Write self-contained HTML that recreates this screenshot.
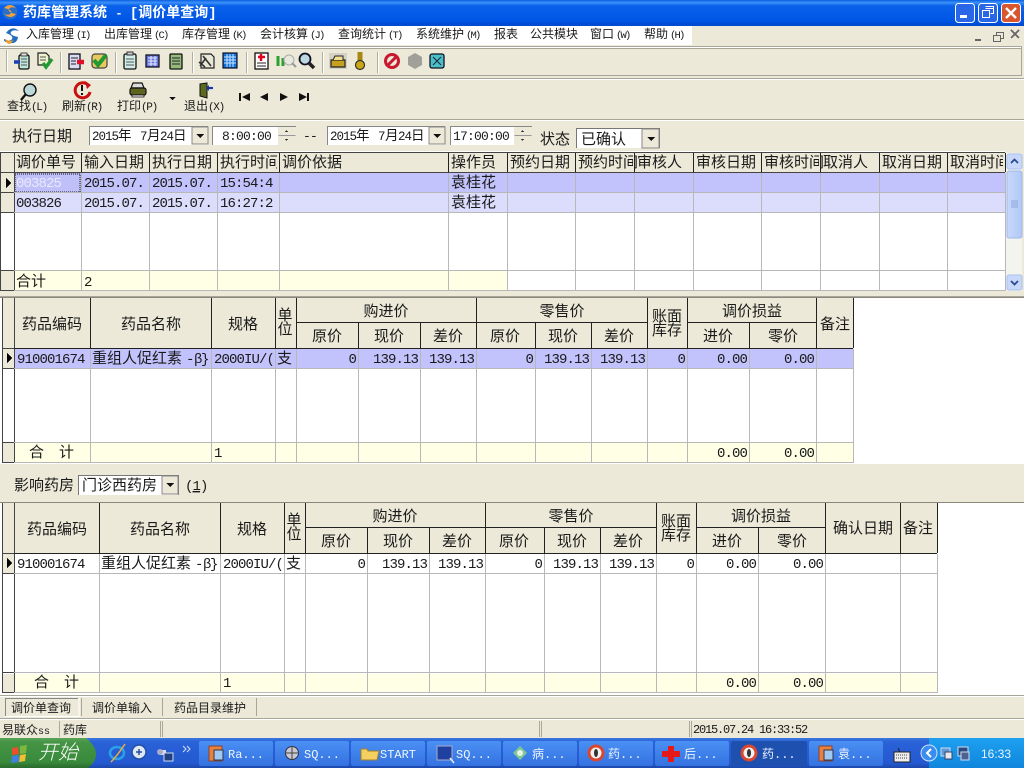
<!DOCTYPE html>
<html><head><meta charset="utf-8"><title>药库管理系统</title>
<style>
html,body{margin:0;padding:0;width:1024px;height:768px;overflow:hidden;background:#ECE9D8}
svg{display:block}
text{font-family:"Liberation Mono","WenQuanYi Zen Hei","Noto Sans CJK SC",monospace;font-size:15px;fill:#1a1a1a;white-space:pre}
.n{font-size:14px;letter-spacing:-.9px;text-anchor:end}
.d{font-size:14px;letter-spacing:-.9px}
.c{text-anchor:middle}
.s{font-size:12px}
.p{font-size:10.5px;letter-spacing:-1.800px}
.q{font-size:11px;letter-spacing:-1.300px}
.t{font-size:12.500px;letter-spacing:-1px}
.tb{font-size:12px;fill:#eef4ff}
</style></head><body>
<svg width="1024" height="768" viewBox="0 0 1024 768" xmlns="http://www.w3.org/2000/svg" shape-rendering="crispEdges">
<defs>
<linearGradient id="tt" x1="0" y1="0" x2="0" y2="1"><stop offset="0" stop-color="#0a5fe0"/><stop offset=".1" stop-color="#3c92fb"/><stop offset=".22" stop-color="#0a62ea"/><stop offset=".8" stop-color="#0055e6"/><stop offset="1" stop-color="#0048cc"/></linearGradient>
<linearGradient id="tk" x1="0" y1="0" x2="0" y2="1"><stop offset="0" stop-color="#3a78e0"/><stop offset=".12" stop-color="#2a62d8"/><stop offset=".85" stop-color="#2458d0"/><stop offset="1" stop-color="#1c46a8"/></linearGradient>
<linearGradient id="st" x1="0" y1="0" x2="0" y2="1"><stop offset="0" stop-color="#5aa45a"/><stop offset=".15" stop-color="#449444"/><stop offset=".8" stop-color="#3a8a3c"/><stop offset="1" stop-color="#2a6a2e"/></linearGradient>
<linearGradient id="bt" x1="0" y1="0" x2="0" y2="1"><stop offset="0" stop-color="#4a90f4"/><stop offset="1" stop-color="#3472e0"/></linearGradient>
<linearGradient id="tr" x1="0" y1="0" x2="0" y2="1"><stop offset="0" stop-color="#1ea0f0"/><stop offset="1" stop-color="#0f86dc"/></linearGradient>
<linearGradient id="sb" x1="0" y1="0" x2="1" y2="0"><stop offset="0" stop-color="#c8d8fa"/><stop offset="1" stop-color="#b0c8f6"/></linearGradient>
</defs>

<!-- title bar -->
<rect width="1024" height="26" fill="url(#tt)"/>
<g shape-rendering="auto">
<circle cx="10" cy="12" r="7.500" fill="#2a70c8"/><path d="M4 8q6-6 12 0q-5-2-7 1t7 5q-5 6-12 0q5 2 7-1t-7-5z" fill="#f0a040"/>
</g>
<text x="23" y="17" style="font-size:14px;font-weight:bold;fill:#fff">药库管理系统 <tspan style="font-size:12px">- </tspan>[调价单查询]</text>
<g shape-rendering="auto">
<rect x="955.500" y="3.500" width="19" height="19" rx="3" fill="#2a66e8" stroke="#fff"/><rect x="960" y="15" width="7" height="3" fill="#fff"/>
<rect x="978.500" y="3.500" width="19" height="19" rx="3" fill="#2a66e8" stroke="#fff"/><path d="M985.500 6.500h8v7h-3M985.500 8.500h8" fill="none" stroke="#fff"/><rect x="982.500" y="10.500" width="7" height="7" fill="none" stroke="#fff" stroke-width="1"/>
<rect x="1001.500" y="3.500" width="19" height="19" rx="3" fill="#d8552e" stroke="#fff"/><path d="M1006 8l10 10M1016 8l-10 10" stroke="#fff" stroke-width="2.400"/>
</g>

<!-- menu bar -->
<rect y="26" width="692" height="19" fill="#fff"/>
<g shape-rendering="auto"><path d="M6 33q6-8 13-2q-6-2-8 1t7 5q-1 7-8 6t-6-4q6 3 8 0t-6-6z" fill="#1f6ec0"/><path d="M5 39q5 3 9 1l-4 4q-4 0-5-5z" fill="#f0a030"/></g>
<text class="s" y="38"><tspan x="26">入库管理</tspan><tspan x="76" class="p">(I)</tspan><tspan x="104">出库管理</tspan><tspan x="154" class="p">(C)</tspan><tspan x="182">库存管理</tspan><tspan x="232" class="p">(K)</tspan><tspan x="260">会计核算</tspan><tspan x="310" class="p">(J)</tspan><tspan x="338">查询统计</tspan><tspan x="388" class="p">(T)</tspan><tspan x="416">系统维护</tspan><tspan x="466" class="p">(M)</tspan><tspan x="494">报表</tspan><tspan x="530">公共模块</tspan><tspan x="590">窗口</tspan><tspan x="616" class="p">(W)</tspan><tspan x="644">帮助</tspan><tspan x="670" class="p">(H)</tspan></text>
<path d="M975 39h6v2h-6z" fill="#666"/>
<path d="M1011 30l8 8M1019 30l-8 8" fill="none" stroke="#666" stroke-width="2"/>
<path d="M993.500 35.500h7v6h-7zM996.500 35.500v-3h7v6h-3" fill="none" stroke="#666"/>

<!-- toolbars frames -->
<path d="M0 46.500H1022M0 48.500H1022M0 75.500H1022M0 78.500H1024M0 119.500H1024" stroke="#a8a698" fill="none"/>
<path d="M0 47.500H1022M0 79.500H1024M0 120.500H1024" stroke="#fff" fill="none"/>
<path d="M1021.500 46v30" stroke="#a8a698"/>
<path d="M6.500 50v22M60.500 52v21M115.500 52v21M192.500 52v21M246.500 52v21M322.500 52v21M377.500 52v21" stroke="#b0ae9f" fill="none"/>
<path d="M7.500 50v22M61.500 52v21M116.500 52v21M193.500 52v21M247.500 52v21M323.500 52v21M378.500 52v21" stroke="#fff" fill="none"/>

<!-- toolbar icons -->
<g shape-rendering="auto">
<rect x="19" y="55" width="10" height="14" rx="1.500" fill="#bfe6da" stroke="#111" stroke-width="1.300"/><path d="M21 59h6M21 62h6M21 65h6" stroke="#555"/><rect x="21" y="53" width="6" height="3" fill="#ddd" stroke="#222" stroke-width=".8"/><path d="M14 62h6" stroke="#1c3fb0" stroke-width="3.500"/>
<path d="M38 53h8l3 3v9H38z" fill="#eef2d0" stroke="#222" stroke-width="1.200"/><path d="M40 57h6M40 60h6" stroke="#555"/><path d="M43 63l3 4 6-8" stroke="#249a34" stroke-width="3.500" fill="none"/>
<rect x="69" y="54" width="11" height="15" fill="#dcdcf0" stroke="#112" stroke-width="1.300"/><path d="M71 58h7M71 61h5M71 64h5" stroke="#223"/><path d="M77 62h7" stroke="#e0102a" stroke-width="4.500"/>
<rect x="92" y="54" width="15" height="14" rx="3" fill="#e8c860" stroke="#444" stroke-width="1.200"/><path d="M94 60l4 5 8-10" stroke="#209a30" stroke-width="4" fill="none"/>
<rect x="124" y="54" width="12" height="15" rx="1.500" fill="#cfeee6" stroke="#111" stroke-width="1.300"/><path d="M126 59h8M126 62h8M126 65h8" stroke="#555"/><rect x="127" y="52" width="6" height="3" fill="#ccc" stroke="#333"/>
<rect x="146" y="55" width="13" height="12" fill="#6878d8" stroke="#112" stroke-width="1.300"/><path d="M148 58h9M148 61h9M148 64h9M151 56v10M155 56v10" stroke="#e8eeff"/>
<rect x="170" y="54" width="12" height="15" rx="1" fill="#98ba78" stroke="#111" stroke-width="1.300"/><path d="M172 58h8M172 61h8M172 64h8" stroke="#223"/>
<path d="M201 54h10l3 3v11h-13z" fill="#e8e8d8" stroke="#222" stroke-width="1.200"/><path d="M199 62l6 5M203 56l8 10M206 58l-6 8" stroke="#333" stroke-width="1.600"/>
<rect x="223" y="53" width="14" height="15" fill="#1070d8" stroke="#112" stroke-width="1.200"/><path d="M227 54v13M230 54v13M233 54v13M224 57h12M224 60h12M224 63h12" stroke="#cfe6ff"/>
<rect x="255" y="53" width="13" height="16" fill="#fff" stroke="#111" stroke-width="1.300"/><path d="M261 54v7M258 57h7" stroke="#e00020" stroke-width="2.500"/><path d="M257 63h9M257 66h9" stroke="#222"/>
<path d="M278 56v10M283 58v8" stroke="#2aa030" stroke-width="3" fill="none"/><circle cx="289" cy="60" r="5" fill="#e8e8e0" stroke="#aaa"/><path d="M292 63l4 4" stroke="#999" stroke-width="2"/>
<circle cx="305" cy="59" r="5.500" fill="#bcd8e0" stroke="#112" stroke-width="1.800"/><path d="M309 63l5 5" stroke="#222" stroke-width="3.500"/>
<rect x="329" y="53" width="18" height="16" fill="#d4d2c4"/><path d="M331 60h14v7h-14z" fill="#c8a020" stroke="#222" stroke-width="1.200"/><path d="M333 60l2-4h8v4" fill="#f0e090" stroke="#222"/>
<path d="M360 52v10" stroke="#a88810" stroke-width="5"/><circle cx="360" cy="65" r="4.500" fill="#c8a818" stroke="#332" stroke-width="1.200"/>
<circle cx="392" cy="61" r="6.500" fill="none" stroke="#c81830" stroke-width="3"/><path d="M387 66l10-10" stroke="#c81830" stroke-width="3"/>
<path d="M415 53l7 4v8l-7 4-7-4v-8z" fill="#a0a098"/>
<rect x="430" y="54" width="14" height="14" rx="2" fill="#48c0c8" stroke="#112" stroke-width="1.300"/><path d="M433 57l8 8M441 57l-8 8" stroke="#223"/>
<!-- big toolbar -->
<circle cx="30" cy="90" r="6" fill="#bcd8d8" stroke="#111" stroke-width="1.400"/><path d="M26 94l-5 6" stroke="#111" stroke-width="2.400"/>
<path d="M88 85a7.500 7.500 0 1 0 2 7" fill="none" stroke="#c81010" stroke-width="3"/><path d="M85 81l6 4-4 4z" fill="#c81010"/><path d="M82 85v6M82 93v2" stroke="#111" stroke-width="2"/>
<path d="M133 83h9l2 5h-13z" fill="#ddd" stroke="#111" stroke-width="1.200"/><rect x="130" y="88" width="16" height="7" rx="2" fill="#5c6420" stroke="#111" stroke-width="1.200"/><path d="M132 95h12v2h-12z" fill="#eee" stroke="#111" stroke-width=".8"/>
<path d="M200 84l7-1v15l-7-2z" fill="#5c6a20" stroke="#111"/><path d="M213 88h-5" stroke="#1838a0" stroke-width="2.200"/><path d="M209 85v6l-3-3z" fill="#1838a0"/>
</g>
<path d="M169 97h7l-3.500 3z" fill="#111"/>
<path d="M239 93h2v8h-2zM250 93v8l-8-4zM268 93v8l-8-4zM280 93v8l8-4zM299 93v8l8-4zM307 93h2v8h-2z" fill="#111"/>
<text class="s" y="110"><tspan x="7">查找</tspan><tspan x="31" class="q">(L)</tspan><tspan x="62">刷新</tspan><tspan x="86" class="q">(R)</tspan><tspan x="117">打印</tspan><tspan x="141" class="q">(P)</tspan><tspan x="184">退出</tspan><tspan x="208" class="q">(X)</tspan></text>

<!-- filters -->
<text x="12" y="141">执行日期</text>
<g>
<rect x="89" y="126" width="119" height="19" fill="#fff"/><path d="M89.500 145V126.500H208" stroke="#888" fill="none"/>
<rect x="192" y="127" width="16" height="17" fill="#ECE9D8" stroke="#888"/><path d="M196 134h8l-4 4z" fill="#111"/>
<rect x="212" y="126" width="66" height="19" fill="#fff"/><path d="M212.500 145V126.500H296" stroke="#888" fill="none"/>
<path d="M278.500 135.500h17" stroke="#999"/><path d="M285 132h3l-1.500-2zM285 139h3l-1.500 2z" fill="#222"/>
<rect x="327" y="126" width="118" height="19" fill="#fff"/><path d="M327.500 145V126.500H445" stroke="#888" fill="none"/>
<rect x="429" y="127" width="16" height="17" fill="#ECE9D8" stroke="#888"/><path d="M433 134h8l-4 4z" fill="#111"/>
<rect x="450" y="126" width="64" height="19" fill="#fff"/><path d="M450.500 145V126.500H532" stroke="#888" fill="none"/>
<path d="M514.500 135.500h17" stroke="#999"/><path d="M521 132h3l-1.500-2zM521 139h3l-1.500 2z" fill="#222"/>
<rect x="576" y="128" width="83" height="20" fill="#fff"/><path d="M576.500 148V128.500H659.500V148" stroke="#777" fill="none"/>
<rect x="642" y="129" width="17" height="19" fill="#ECE9D8" stroke="#888"/><path d="M647 137h8l-4 4z" fill="#111"/>
</g>
<text y="140" style="font-size:13.500px"><tspan x="92" class="t">2015</tspan><tspan x="118">年</tspan><tspan x="140" class="t">7</tspan><tspan x="147">月</tspan><tspan x="160" class="t">24</tspan><tspan x="173">日</tspan></text>
<text y="140" style="font-size:13.500px"><tspan x="330" class="t">2015</tspan><tspan x="356">年</tspan><tspan x="378" class="t">7</tspan><tspan x="385">月</tspan><tspan x="398" class="t">24</tspan><tspan x="411">日</tspan></text>
<text x="222" y="140" style="font-size:13px;letter-spacing:-.8px">8:00:00</text>
<text x="453" y="140" style="font-size:13px;letter-spacing:-.8px">17:00:00</text>
<text x="303" y="140" style="font-size:13px;letter-spacing:-.8px">--</text>
<text x="540" y="144">状态</text>
<text x="581" y="144">已确认</text>

<!-- GRID 1 -->
<rect y="151" width="1005" height="140" fill="#fff"/>
<rect x="0" y="152" width="1005" height="21" fill="#ECE9D8"/>
<rect x="14" y="173" width="991" height="20" fill="#c2c2fc"/>
<rect x="14" y="193" width="991" height="20" fill="#dcdcfc"/>
<rect x="14" y="271" width="494" height="20" fill="#ffffe6"/>
<rect x="14" y="173" width="67" height="20" fill="#b4b4f0"/>
<rect x="15" y="174" width="65" height="18" fill="#c0c0f8" stroke="#111" stroke-width="1" stroke-dasharray="1 1"/>
<rect x="1" y="173" width="13" height="20" fill="#ECE9D8"/><rect x="1" y="193" width="13" height="20" fill="#ECE9D8"/><rect x="1" y="271" width="13" height="20" fill="#ECE9D8"/>
<path d="M0.500 152v139M14.500 152v139M0 152.500H1005M0 172.500H1005M0 192.500H14M0 212.500H14M0 270.500H14M0 290.500H14" stroke="#444" fill="none"/>
<path d="M81.500 153v19M149.500 153v19M217.500 153v19M279.500 153v19M448.500 153v19M507.500 153v19M575.500 153v19M634.500 153v19M693.500 153v19M761.500 153v19M820.500 153v19M879.500 153v19M947.500 153v19M1005.500 153v19" stroke="#222" fill="none"/>
<path d="M81.500 173v118M149.500 173v118M217.500 173v118M279.500 173v118M448.500 173v118M507.500 173v118M575.500 173v118M634.500 173v118M693.500 173v118M761.500 173v118M820.500 173v118M879.500 173v118M947.500 173v118M1005.500 173v118M14 192.500H1005M14 212.500H1005M14 270.500H1005M14 290.500H1005" stroke="#b8b8b8" fill="none"/>
<path d="M6 178v10l5-5z" fill="#000"/>
<text y="167"><tspan x="16">调价单号</tspan><tspan x="84">输入日期</tspan><tspan x="152">执行日期</tspan><tspan x="220">执行时间</tspan><tspan x="282">调价依据</tspan><tspan x="451">操作员</tspan><tspan x="510">预约日期</tspan><tspan x="578">预约时间</tspan><tspan x="637">审核人</tspan><tspan x="696">审核日期</tspan><tspan x="764">审核时间</tspan><tspan x="823">取消人</tspan><tspan x="882">取消日期</tspan><tspan x="950">取消时间</tspan></text>
<rect x="277" y="154" width="2" height="17" fill="#ECE9D8"/>
<rect x="633" y="154" width="1" height="17" fill="#ECE9D8"/><rect x="819" y="154" width="1" height="17" fill="#ECE9D8"/><rect x="1003" y="154" width="2" height="17" fill="#ECE9D8"/>
<text class="d" y="187"><tspan x="16" style="fill:#e8e8ff">003825</tspan><tspan x="84">2015.07.</tspan><tspan x="152">2015.07.</tspan><tspan x="220">15:54:4</tspan></text>
<text x="451" y="187">袁桂花</text>
<text class="d" y="207"><tspan x="16">003826</tspan><tspan x="84">2015.07.</tspan><tspan x="152">2015.07.</tspan><tspan x="220">16:27:2</tspan></text>
<text x="451" y="207">袁桂花</text>
<text x="16" y="286">合计</text><text class="d" x="84" y="286">2</text>
<!-- scrollbar -->
<rect x="1006" y="153" width="16" height="138" fill="#f4f4ee"/>
<g shape-rendering="auto">
<rect x="1007" y="154" width="15" height="15" rx="2" fill="#c8d8fa" stroke="#a8c0ee"/><path d="M1011 163l3.500-3.500 3.500 3.500" fill="none" stroke="#2a4a90" stroke-width="1.800"/>
<rect x="1007" y="171" width="15" height="67" rx="2" fill="url(#sb)" stroke="#a0b8e8"/>
<path d="M1011 201h7M1011 203h7M1011 205h7M1011 207h7" stroke="#8ca8dc" stroke-width="1"/>
<rect x="1007" y="275" width="15" height="15" rx="2" fill="#c8d8fa" stroke="#a8c0ee"/><path d="M1011 281l3.500 3.500 3.500-3.500" fill="none" stroke="#2a4a90" stroke-width="1.800"/>
</g>

<!-- GRID 2 -->
<path d="M0 296.500H1024" stroke="#a8a698"/><path d="M0 297.500H1024" stroke="#8a887c"/>
<rect y="298" width="1024" height="166" fill="#fff"/>
<rect x="2" y="298" width="851" height="50" fill="#ECE9D8"/>
<rect x="14" y="349" width="839" height="19" fill="#c2c2fc"/>
<rect x="14" y="443" width="839" height="19" fill="#ffffe6"/>
<rect x="3" y="349" width="11" height="19" fill="#ECE9D8"/><rect x="3" y="443" width="11" height="19" fill="#ECE9D8"/>
<path d="M2.500 298v165M14.500 298v165M2 348.500H14M2 368.500H14M2 442.500H14M2 462.500H14" stroke="#444" fill="none"/>
<path d="M90.500 298v50M211.500 298v50M275.500 298v50M296.500 298v50M358.500 323v25M420.500 323v25M476.500 298v50M535.500 323v25M591.500 323v25M647.500 298v50M687.500 298v50M749.500 323v25M816.500 298v50M853.500 298v50M296 322.500H476M477 322.500H647M688 322.500H816M14 348.500H853" stroke="#222" fill="none"/>
<path d="M90.500 349v114M211.500 349v114M275.500 349v114M296.500 349v114M358.500 349v114M420.500 349v114M476.500 349v114M535.500 349v114M591.500 349v114M647.500 349v114M687.500 349v114M749.500 349v114M816.500 349v114M853.500 349v114M14 368.500H853M14 442.500H853M14 462.500H853" stroke="#b8b8b8" fill="none"/>
<path d="M7 353v10l5-5z" fill="#000"/>
<text class="c" x="52" y="329">药品编码</text><text class="c" x="151" y="329">药品名称</text><text class="c" x="243" y="329">规格</text>
<text class="c" x="285" y="320">单</text><text class="c" x="285" y="334">位</text>
<text class="c" x="386" y="316">购进价</text><text class="c" x="562" y="316">零售价</text><text class="c" x="752" y="316">调价损益</text>
<text class="c" x="327" y="341">原价</text><text class="c" x="389" y="341">现价</text><text class="c" x="448" y="341">差价</text><text class="c" x="505" y="341">原价</text><text class="c" x="563" y="341">现价</text><text class="c" x="619" y="341">差价</text>
<text class="c" x="667" y="321">账面</text><text class="c" x="667" y="335">库存</text><text class="c" x="718" y="341">进价</text><text class="c" x="783" y="341">零价</text><text class="c" x="835" y="329">备注</text>
<text class="d" x="17" y="363">910001674</text>
<text y="363"><tspan x="92">重组人促红素</tspan><tspan x="186" class="d">-</tspan><tspan x="194" class="d">β</tspan><tspan x="201" class="d">}</tspan></text>
<text class="d" x="214" y="363">2000IU/(</text><text x="277" y="363">支</text>
<text class="n" y="363" x="356">0</text><text class="n" y="363" x="418">139.13</text><text class="n" y="363" x="474">139.13</text><text class="n" y="363" x="533">0</text><text class="n" y="363" x="589">139.13</text><text class="n" y="363" x="645">139.13</text><text class="n" y="363" x="685">0</text><text class="n" y="363" x="747">0.00</text><text class="n" y="363" x="814">0.00</text>
<text x="29" y="457">合　计</text><text class="d" x="214" y="457">1</text><text class="n" y="457" x="747">0.00</text><text class="n" y="457" x="814">0.00</text>

<!-- pharmacy row -->
<text x="14" y="490">影响药房</text>
<rect x="78" y="475" width="101" height="20" fill="#fff"/><path d="M78.500 495V475.500H178.500V495" stroke="#777" fill="none"/>
<rect x="162" y="476" width="16" height="18" fill="#ECE9D8" stroke="#888"/><path d="M166 483h8l-4 4z" fill="#111"/>
<text x="82" y="490">门诊西药房</text>
<text class="d" x="185" y="490">(<tspan text-decoration="underline">1</tspan>)</text>

<!-- GRID 3 -->
<path d="M0 502.500H1024" stroke="#8a887c"/>
<rect y="503" width="1024" height="192" fill="#fff"/>
<rect x="2" y="503" width="935" height="50" fill="#ECE9D8"/>
<rect x="15" y="674" width="922" height="19" fill="#ffffe6"/>
<rect x="3" y="554" width="12" height="19" fill="#ECE9D8"/><rect x="3" y="674" width="12" height="19" fill="#ECE9D8"/>
<path d="M2.500 503v190M14.500 503v190M2 553.500H14M2 573.500H14M2 672.500H14M2 692.500H14" stroke="#444" fill="none"/>
<path d="M99.500 503v50M220.500 503v50M284.500 503v50M305.500 503v50M367.500 528v25M429.500 528v25M485.500 503v50M544.500 528v25M600.500 528v25M656.500 503v50M696.500 503v50M758.500 528v25M825.500 503v50M900.500 503v50M937.500 503v50M305 527.500H485M486 527.500H656M697 527.500H825M14 553.500H937" stroke="#222" fill="none"/>
<path d="M99.500 554v139M220.500 554v139M284.500 554v139M305.500 554v139M367.500 554v139M429.500 554v139M485.500 554v139M544.500 554v139M600.500 554v139M656.500 554v139M696.500 554v139M758.500 554v139M825.500 554v139M900.500 554v139M937.500 554v139M14 573.500H937M14 672.500H937M14 692.500H937" stroke="#b8b8b8" fill="none"/>
<path d="M7 558v10l5-5z" fill="#000"/>
<text class="c" x="57" y="534">药品编码</text><text class="c" x="160" y="534">药品名称</text><text class="c" x="252" y="534">规格</text>
<text class="c" x="294" y="525">单</text><text class="c" x="294" y="539">位</text>
<text class="c" x="395" y="521">购进价</text><text class="c" x="571" y="521">零售价</text><text class="c" x="761" y="521">调价损益</text>
<text class="c" x="336" y="546">原价</text><text class="c" x="398" y="546">现价</text><text class="c" x="457" y="546">差价</text><text class="c" x="514" y="546">原价</text><text class="c" x="572" y="546">现价</text><text class="c" x="628" y="546">差价</text>
<text class="c" x="676" y="526">账面</text><text class="c" x="676" y="540">库存</text><text class="c" x="727" y="546">进价</text><text class="c" x="792" y="546">零价</text><text class="c" x="863" y="533">确认日期</text><text class="c" x="918" y="533">备注</text>
<text class="d" x="17" y="568">910001674</text>
<text y="568"><tspan x="101">重组人促红素</tspan><tspan x="195" class="d">-</tspan><tspan x="203" class="d">β</tspan><tspan x="210" class="d">}</tspan></text>
<text class="d" x="223" y="568">2000IU/(</text><text x="286" y="568">支</text>
<text class="n" y="568" x="365">0</text><text class="n" y="568" x="427">139.13</text><text class="n" y="568" x="483">139.13</text><text class="n" y="568" x="542">0</text><text class="n" y="568" x="598">139.13</text><text class="n" y="568" x="654">139.13</text><text class="n" y="568" x="694">0</text><text class="n" y="568" x="756">0.00</text><text class="n" y="568" x="823">0.00</text>
<text x="34" y="687">合　计</text><text class="d" x="223" y="687">1</text><text class="n" y="687" x="756">0.00</text><text class="n" y="687" x="823">0.00</text>

<!-- tabs -->
<path d="M0 695.500H1024" stroke="#a8a698"/><path d="M0 696.500H1024" stroke="#fff"/>
<rect x="0" y="697" width="1024" height="22" fill="#ECE9D8"/>
<path d="M5.500 716V698.500H78" stroke="#888" fill="none"/><path d="M5 716.500H79V698" stroke="#fff" fill="none"/>
<path d="M81.500 698v18M162.500 698v18M256.500 698v18" stroke="#a8a698" fill="none"/>
<text class="s" y="712"><tspan x="11">调价单查询</tspan><tspan x="92">调价单输入</tspan><tspan x="174">药品目录维护</tspan></text>
<path d="M0 718.500H1024" stroke="#a8a698"/><path d="M0 719.500H1024" stroke="#fff"/>

<!-- status -->
<path d="M59.500 721v16M160.500 721v16M162.500 721v16M539.500 721v16M541.500 721v16M689.500 721v16M691.500 721v16" stroke="#aca899" fill="none"/>
<text class="s" y="734"><tspan x="2">易联众</tspan><tspan style="font-size:10px">ss</tspan><tspan x="63">药库</tspan></text>
<text x="693" y="733" style="font-size:12px;letter-spacing:-1.200px">2015.07.24 16:33:52</text>

<!-- taskbar -->
<rect y="738" width="1024" height="30" fill="url(#tk)"/>
<g shape-rendering="auto">
<path d="M0 738H86q10 8 10 16t-8 14H0z" fill="url(#st)"/>
<path d="M12 748l6-1 1 7-7 1z" fill="#e85030"/><path d="M20 746l7-1-1 8-6 1z" fill="#7ab840"/><path d="M12 756l7-1 0 7-8 1z" fill="#4080e0"/><path d="M20 755l6-1-1 7-6 1z" fill="#f0c030"/>
</g>
<text x="38" y="759" style="font-size:20px;font-style:italic;fill:#fff;font-weight:300">开始</text>
<g shape-rendering="auto">
<ellipse cx="117" cy="753" rx="7" ry="6" fill="none" stroke="#2aa0e8" stroke-width="2.500"/><path d="M111 762q6-6 14-18" stroke="#e8b040" stroke-width="1.500" fill="none"/>
<circle cx="139" cy="752" r="7" fill="#dfe8f4" stroke="#2050a0" stroke-width="1.500"/><path d="M136 752h6M139 749v6" stroke="#2050a0" stroke-width="1.500"/>
<rect x="160" y="750" width="6" height="5" fill="#dde" /><rect x="164" y="753" width="9" height="8" fill="#204080" stroke="#cde"/><circle cx="160" cy="752" r="3" fill="#aac"/>
<path d="M183 746l3 3-3 3M187 746l3 3-3 3" stroke="#cfe0ff" fill="none"/>
</g>
<g shape-rendering="auto">
<rect x="199" y="741" width="74" height="25" rx="2" fill="url(#bt)"/>
<rect x="275" y="741" width="74" height="25" rx="2" fill="url(#bt)"/>
<rect x="351" y="741" width="74" height="25" rx="2" fill="url(#bt)"/>
<rect x="427" y="741" width="74" height="25" rx="2" fill="url(#bt)"/>
<rect x="503" y="741" width="74" height="25" rx="2" fill="url(#bt)"/>
<rect x="579" y="741" width="74" height="25" rx="2" fill="url(#bt)"/>
<rect x="655" y="741" width="74" height="25" rx="2" fill="url(#bt)"/>
<rect x="731" y="741" width="76" height="25" rx="2" fill="#1e50b0"/>
<rect x="809" y="741" width="74" height="25" rx="2" fill="url(#bt)"/>
<!-- task icons -->
<rect x="209" y="746" width="13" height="15" fill="#e88040" stroke="#843"/><rect x="214" y="750" width="9" height="10" fill="#a0c8f0" stroke="#334"/>
<circle cx="292" cy="753" r="6.500" fill="#c8c8d8" stroke="#334"/><path d="M292 746v14M285 753h14" stroke="#443"/>
<path d="M361 749h6l1 2h11l-2 9h-16z" fill="#f4d060" stroke="#a08030"/>
<rect x="437" y="746" width="15" height="14" fill="#2040a0" stroke="#aac"/><path d="M450 758l4 5" stroke="#eee" stroke-width="1.500"/>
<path d="M520 746l7 7-7 7-7-7z" fill="#80c890"/><circle cx="520" cy="753" r="3" fill="#e8f4e8"/>
<circle cx="596" cy="753" r="7" fill="#f0f0f0"/><path d="M596 746a7 7 0 0 1 0 14a7 7 0 0 1 0-14z" fill="none" stroke="#d84830" stroke-width="3"/><ellipse cx="596" cy="753" rx="2" ry="4" fill="#333"/>
<path d="M668 746h6v5h6v6h-6v5h-6v-5h-6v-6h6z" fill="#e81818"/>
<circle cx="749" cy="753" r="7" fill="#f0f0f0"/><path d="M749 746a7 7 0 0 1 0 14a7 7 0 0 1 0-14z" fill="none" stroke="#d84830" stroke-width="3"/><ellipse cx="749" cy="753" rx="2" ry="4" fill="#333"/>
<rect x="819" y="746" width="13" height="15" fill="#e88040" stroke="#843"/><rect x="824" y="750" width="9" height="10" fill="#a0c8f0" stroke="#334"/>
</g>
<text class="tb" y="758"><tspan x="228">Ra...</tspan><tspan x="304">SQ...</tspan><tspan x="380">START</tspan><tspan x="456">SQ...</tspan><tspan x="532">病...</tspan><tspan x="608">药...</tspan><tspan x="684">后...</tspan><tspan x="762">药...</tspan><tspan x="838">袁...</tspan></text>
<!-- tray -->
<rect x="929" y="738" width="95" height="30" fill="url(#tr)"/>
<g shape-rendering="auto">
<rect x="894" y="752" width="16" height="10" fill="#eee" stroke="#222"/><path d="M896 755h12M896 758h12" stroke="#444" stroke-dasharray="1 1"/><path d="M900 752l-2-4" stroke="#222"/>
<circle cx="929" cy="753" r="8" fill="#3a8cf0" stroke="#cfe4ff"/><path d="M931 749l-4 4 4 4" stroke="#fff" stroke-width="2" fill="none"/>
<rect x="941" y="748" width="9" height="8" fill="#6098d8" stroke="#cde"/><rect x="945" y="752" width="7" height="7" fill="#e8e8f0" stroke="#346"/>
<rect x="958" y="747" width="10" height="9" fill="#2a4a80" stroke="#cde"/><rect x="961" y="752" width="8" height="8" fill="#506090" stroke="#cde"/>
</g>
<text x="981" y="758" style="font-family:'Liberation Sans',sans-serif;font-size:12px;fill:#e8f4ff">16:33</text>
</svg>
</body></html>
